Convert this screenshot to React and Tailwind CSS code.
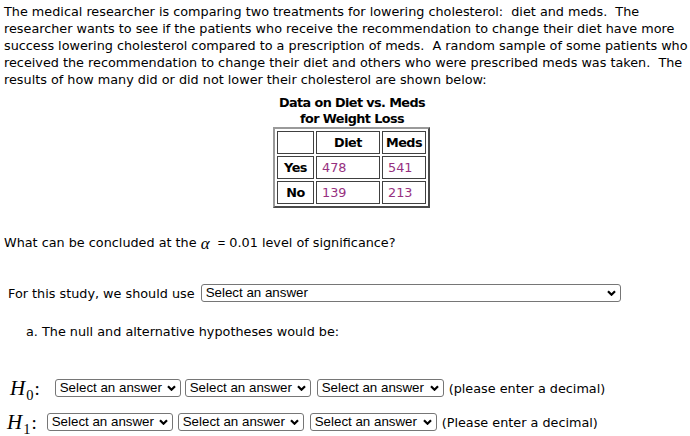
import React from 'react';

const intro = [
  'The medical researcher is comparing two treatments for lowering cholesterol:\u00a0 diet and meds.\u00a0 The',
  'researcher wants to see if the patients who receive the recommendation to change their diet have more',
  'success lowering cholesterol compared to a prescription of meds.\u00a0 A random sample of some patients who',
  'received the recommendation to change their diet and others who were prescribed meds was taken.\u00a0 The',
  'results of how many did or did not lower their cholesterol are shown below:',
];

const rows = [
  { label: 'Yes', diet: 478, meds: 541 },
  { label: 'No', diet: 139, meds: 213 },
];

function Chevron() {
  return (
    <svg width="9" height="6" viewBox="0 0 9 6" className="shrink-0">
      <path d="M1 1.2 L4.5 4.7 L8 1.2" fill="none" stroke="#000" strokeWidth="2.2" />
    </svg>
  );
}

function Select({ className }) {
  return (
    <div className={`flex h-[18px] shrink-0 items-center justify-between rounded-[3px] border border-[#767676] bg-white pl-[4px] pr-[4px] font-['Liberation_Sans',Arial,sans-serif] text-[13.33px] leading-none text-black ${className}`}>
      <span>Select an answer</span>
      <Chevron />
    </div>
  );
}

function MathH({ sub }) {
  return (
    <span className="flex items-baseline font-['Liberation_Serif',serif] leading-none">
      <span className="text-[21px] italic">H</span>
      <span className="ml-[1px] translate-y-[5px] text-[14.5px]">{sub}</span>
      <span className="ml-[1px] text-[19px]">:</span>
    </span>
  );
}

export default function App() {
  return (
    <div className="h-[436px] w-[690px] overflow-hidden bg-white font-['DejaVu_Sans',sans-serif] text-[12.8px] leading-[17px] text-black">
      <div className="pl-[4px] pt-[3px]">
        {intro.map((line) => (
          <div key={line} className="whitespace-pre">{line}</div>
        ))}
      </div>

      <div className="ml-[273px] mt-[7px] w-[158px]">
        <div className="whitespace-nowrap text-center font-bold leading-[16px] tracking-[-0.6px]">
          Data on Diet vs. Meds<br />for Weight Loss
        </div>
        <table className="border-separate border-spacing-[2px] border-2 border-t-[#9a9a9a] border-l-[#9a9a9a] border-r-[#4a4a4a] border-b-[#4a4a4a]">
          <tbody>
            <tr>
              <td className="h-[23px] w-[37px] border border-[#404040] p-0"></td>
              <th className="h-[23px] w-[64px] border border-[#404040] p-0 text-center font-bold tracking-[-0.5px]">Diet</th>
              <th className="h-[23px] w-[44px] border border-[#404040] p-0 text-center font-bold tracking-[-0.5px]">Meds</th>
            </tr>
            {rows.map((r) => (
              <tr key={r.label}>
                <th className="h-[23px] border border-[#404040] p-0 text-center font-bold tracking-[-0.5px]">{r.label}</th>
                <td className="h-[23px] border border-[#404040] py-0 pl-[5px] text-[#96307f]">{r.diet}</td>
                <td className="h-[23px] border border-[#404040] py-0 pl-[5px] text-[#96307f]">{r.meds}</td>
              </tr>
            ))}
          </tbody>
        </table>
      </div>

      <div className="mt-[25px] whitespace-pre pl-[4px]">
        What can be concluded at the{' '}
        <span className="inline-block translate-y-[2px] font-['Liberation_Serif',serif] text-[17px] italic leading-none">α</span>
        {'  '}<span className="font-['Liberation_Sans',Arial,sans-serif]">=</span> 0.01 level of significance?
      </div>

      <div className="mt-[33px] flex h-[18px] items-center pl-[8px]">
        <span className="whitespace-pre">For this study, we should use</span>
        <Select className="ml-[6px] w-[420px]" />
      </div>

      <div className="mt-[21px] pl-[26px]">a. The null and alternative hypotheses would be:</div>

      <div className="mt-[39px] flex h-[18px] items-center pl-[10px]">
        <MathH sub="0" />
        <Select className="ml-[15px] w-[126px]" />
        <Select className="ml-[4px] w-[126px]" />
        <Select className="ml-[6px] w-[127px]" />
        <span className="ml-[5px] whitespace-pre">(please enter a decimal)</span>
      </div>

      <div className="mt-[16px] flex h-[18px] items-center pl-[7px]">
        <MathH sub="1" />
        <Select className="ml-[10px] w-[126px]" />
        <Select className="ml-[5px] w-[126px]" />
        <Select className="ml-[6px] w-[127px]" />
        <span className="ml-[5px] whitespace-pre">(Please enter a decimal)</span>
      </div>
    </div>
  );
}
